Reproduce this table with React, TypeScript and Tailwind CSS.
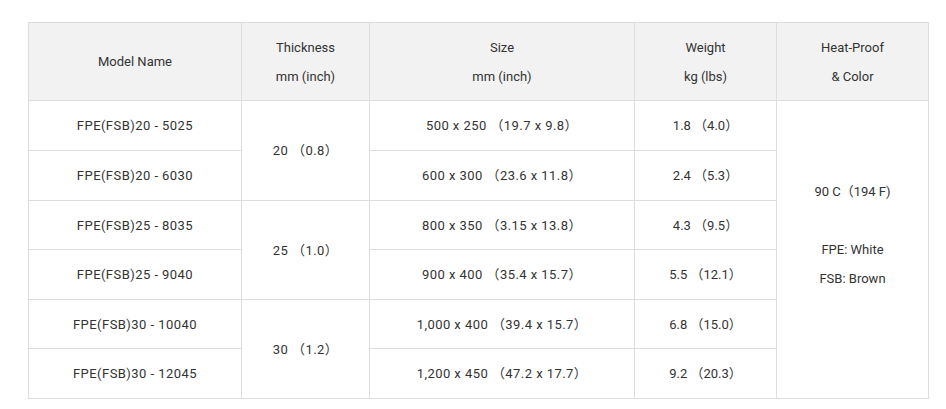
import React from "react";

const rows = [
  { model: "FPE(FSB)20 - 5025", size: "500 x 250 （19.7 x 9.8）", weight: "1.8 （4.0）", h: "h-[50px]" },
  { model: "FPE(FSB)20 - 6030", size: "600 x 300 （23.6 x 11.8）", weight: "2.4 （5.3）", h: "h-[50px]" },
  { model: "FPE(FSB)25 - 8035", size: "800 x 350 （3.15 x 13.8）", weight: "4.3 （9.5）", h: "h-[49px]" },
  { model: "FPE(FSB)25 - 9040", size: "900 x 400 （35.4 x 15.7）", weight: "5.5 （12.1）", h: "h-[50px]" },
  { model: "FPE(FSB)30 - 10040", size: "1,000 x 400 （39.4 x 15.7）", weight: "6.8 （15.0）", h: "h-[49px]" },
  { model: "FPE(FSB)30 - 12045", size: "1,200 x 450 （47.2 x 17.7）", weight: "9.2 （20.3）", h: "h-[50px]" },
];

const thick: Record<number, string> = { 0: "20 （0.8）", 2: "25 （1.0）", 4: "30 （1.2）" };

export default function App() {
  const td = "border border-[#dddddd] text-center align-middle p-0";
  const tdw = "border border-[#dddddd] text-center align-middle p-0 tracking-[0.45px]";
  const th = "border border-[#dddddd] bg-[#f2f2f2] text-center align-middle font-normal p-0";
  return (
    <div
      className="w-[946px] h-[409px] bg-white pt-[22px] pl-[28px] text-[13px] leading-[29px] text-[#333333]"
      style={{ fontFamily: 'Roboto, "Noto Sans CJK JP", sans-serif' }}
    >
      <table className="border-collapse table-fixed w-[900px]">
        <colgroup>
          <col className="w-[213px]" />
          <col className="w-[128px]" />
          <col className="w-[265px]" />
          <col className="w-[142px]" />
          <col className="w-[152px]" />
        </colgroup>
        <thead>
          <tr className="h-[78px]">
            <th className={th}>Model Name</th>
            <th className={th}>
              Thickness
              <br />
              mm (inch)
            </th>
            <th className={th}>
              Size
              <br />
              mm (inch)
            </th>
            <th className={th}>
              Weight
              <br />
              kg (lbs)
            </th>
            <th className={th}>
              Heat-Proof
              <br />
              &amp; Color
            </th>
          </tr>
        </thead>
        <tbody>
          {rows.map((r, i) => (
            <tr key={i} className={r.h}>
              <td className={tdw}>{r.model}</td>
              {i % 2 === 0 && (
                <td className={tdw} rowSpan={2}>
                  {thick[i]}
                </td>
              )}
              <td className={tdw}>{r.size}</td>
              <td className={td}>{r.weight}</td>
              {i === 0 && (
                <td className={td} rowSpan={6}>
                  90 C（194 F)
                  <br />
                  <br />
                  FPE: White
                  <br />
                  FSB: Brown
                  <br />
                  <br />
                </td>
              )}
            </tr>
          ))}
        </tbody>
      </table>
    </div>
  );
}
